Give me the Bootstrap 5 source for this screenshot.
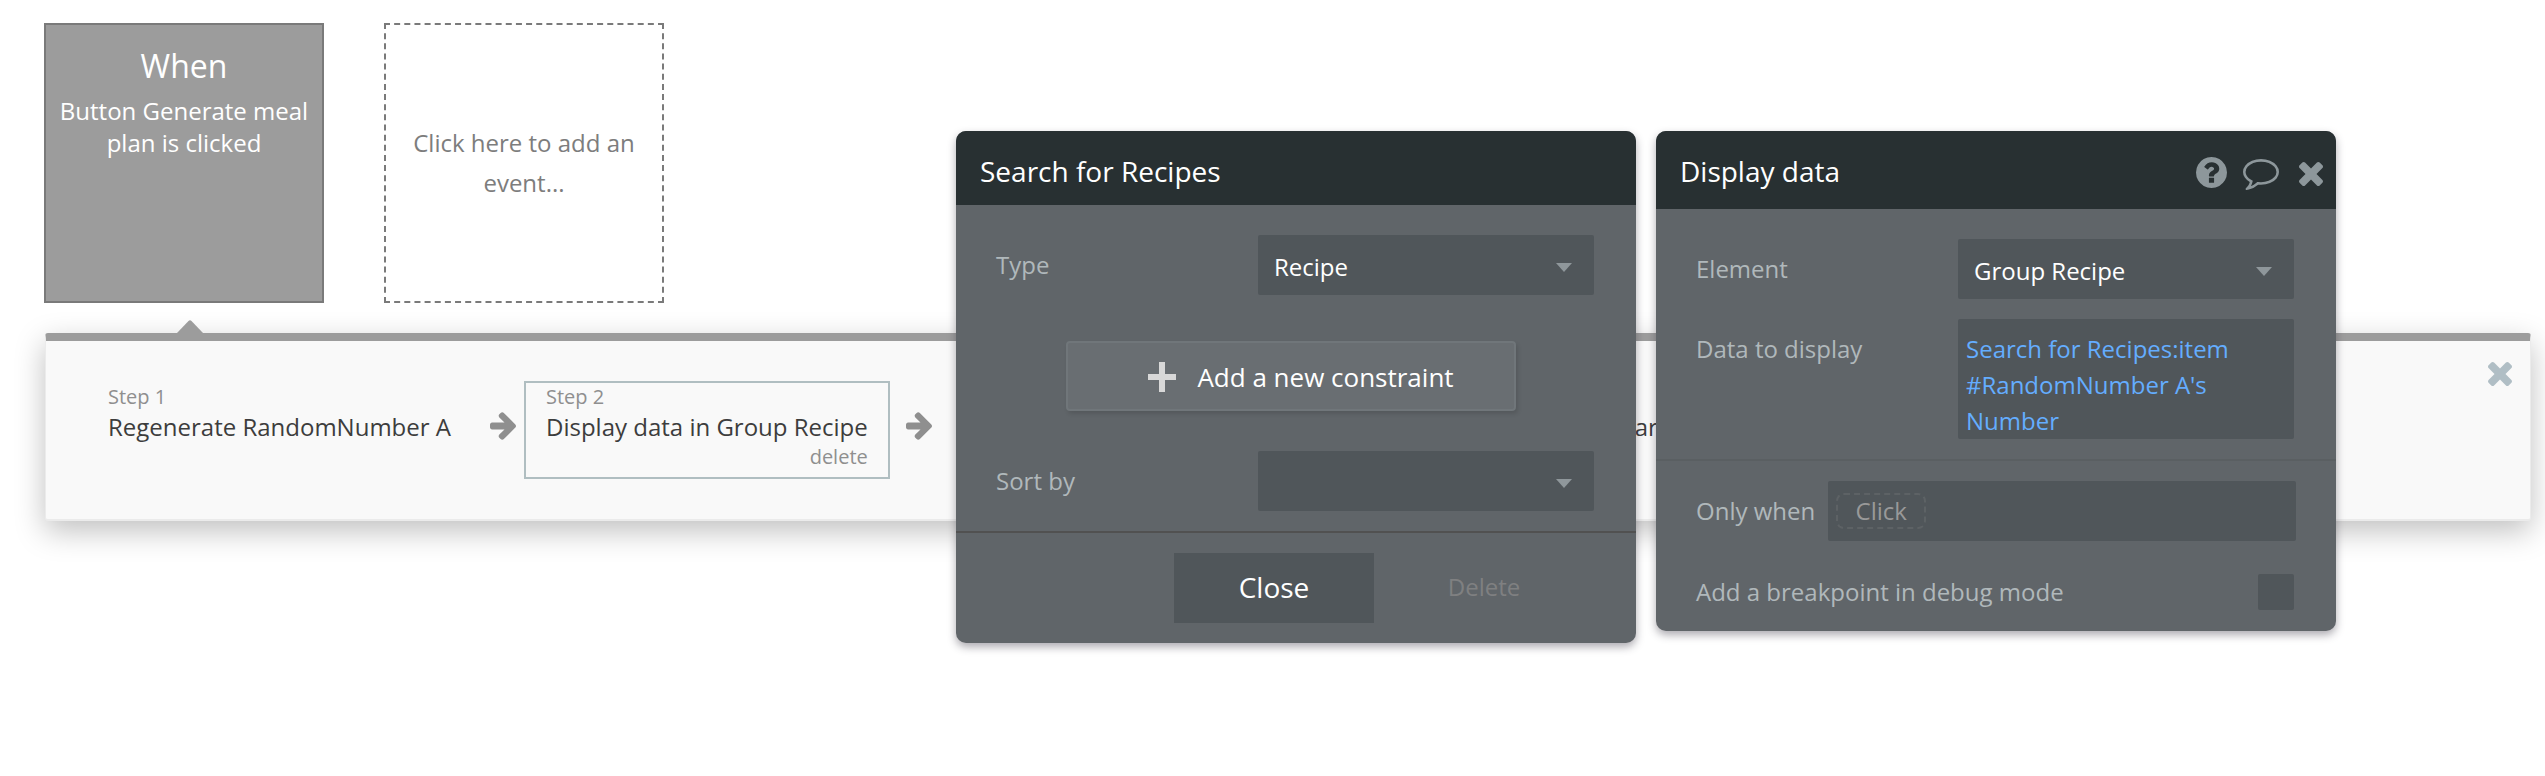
<!DOCTYPE html>
<html lang="en">
<head>
<meta charset="utf-8">
<meta name="viewport" content="width=device-width, initial-scale=1">
<title>Workflow editor</title>
<link href="https://cdn.jsdelivr.net/npm/bootstrap@5.3.0/dist/css/bootstrap.min.css" rel="stylesheet">
<style>
  body { font-family: "Open Sans", "Noto Sans", sans-serif; font-size: 24px; line-height: 36px; color: #3d3d3d; background: #fff; }
  button { font-family: inherit; }
  svg { display: block; fill: currentColor; }

  .events { padding: 23px 44px 0; gap: 60px; }
  .event-tile { width: 280px; height: 280px; border: 2px solid #7a7a7a; background: #9c9c9c; color: #fff; padding: 19px 8px 0; line-height: 32px; text-align: center; }
  .event-tile h2 { font-size: 32px; line-height: 44px; font-weight: 400; margin: 0 0 7px; }
  .event-new { background: #fff; border-style: dashed; color: #7d7d7d; padding: 0 16px; line-height: 40px; }

  .flow { position: relative; margin: 30px 14px 0 45px; border: 1px solid #ebebeb; border-top: 8px solid #9c9c9c; border-bottom-width: 2px; border-radius: 3px; background: #f9f9f9; box-shadow: 0 10px 30px rgba(0,0,0,.25); min-height: 188px; padding: 40px 18px 40px 40px; }
  .flow-pointer { position: absolute; left: 131px; top: -21px; color: #9c9c9c; }
  .step { border: 2px solid transparent; padding: 0 20px; height: 98px; }
  .step.selected { border-color: #b0bec1; margin: 0 16px 0 8px; }
  .step-hidden { margin-left: 681px; }
  .step-no, .step-del { font-size: 20px; line-height: 28px; color: #8f8f8f; }
  .step-title { line-height: 32px; white-space: nowrap; }
  .step-del { align-self: flex-end; border: 0; background: none; padding: 0; }
  .arrow { color: #8f8f8f; margin-top: 31px; }
  .arrow-first { margin-left: 17px; }
  .plain { border: 0; background: none; padding: 0; color: inherit; }
  .flow-close { color: #b0bec5; margin-top: -19px; }

  .popups { position: absolute; left: 956px; top: 131px; gap: 20px; }
  .editor { width: 680px; border-radius: 10px; background: #606569; color: #b0b8bb; box-shadow: 0 4px 8px rgba(50,45,60,.4); overflow: hidden; }
  .editor-head { background: #283032; color: #fff; height: 74px; padding: 6px 13px 0 24px; }
  .editor-head.tall { height: 78px; padding-top: 2px; }
  .editor-head h1 { font-size: 28px; line-height: 40px; font-weight: 400; margin: 0; }
  .tools { color: #8d979b; gap: 16px; padding-top: 6px; }
  .tools .help { padding-bottom: 3px; }
  .tools .dismiss { padding-left: 4px; }
  .editor-body { padding: 30px 42px 20px 40px; }
  .field, .field:focus { background-color: #50565a; color: #fff; border: 0; border-radius: 2px; font-size: 24px; line-height: 36px; box-shadow: none; }
  .pick { width: 336px; height: 60px; padding: 4px 16px 0; background-image: url("data:image/svg+xml,%3Csvg xmlns='http://www.w3.org/2000/svg' viewBox='0 0 16 9'%3E%3Cpath fill='%238f979b' d='M0 0h16L8 9z'/%3E%3C/svg%3E"); background-size: 16px 9px; background-position: right 22px top 28px; }
  .expr, .expr:focus { width: 336px; height: 120px; padding: 12px 8px 0; color: #64adff; resize: none; overflow: hidden; }
  .btn-add { width: 450px; height: 70px; margin: 46px 0 40px 70px; padding: 2px 0 0 20px; border: 2px solid #70767a; border-radius: 4px; background: #696e72; color: #fff; font-size: 26px; box-shadow: 2px 3px 4px rgba(0,0,0,.12); gap: 21px; }
  .btn-add svg { color: #d8d8d8; }
  .editor-foot { border-top: 2px solid #515151; padding: 20px 52px 20px 0; gap: 10px; }
  .editor-foot button { width: 200px; height: 70px; border: 0; padding: 0 0 2px; }
  .btn-shut { background: #50565a; color: #fff; font-size: 28px; }
  .btn-del { background: none; color: #7f8081; }
  .rule { border-top: 2px solid #5a5f62; padding: 20px 42px 20px 40px; }
  .only { margin-right: 5px; }
  .cond { height: 60px; padding: 0 8px; margin-right: -2px; }
  .chip { border: 2px dashed #5d6265; border-radius: 8px; background: none; color: #999; width: 90px; height: 36px; line-height: 30px; padding: 0; }
  .debug { padding: 33px 0 1px; }
  .tick { appearance: none; width: 36px; height: 36px; background: #50565a; border-radius: 2px; margin: 0; }
</style>
</head>
<body class="min-vh-100">
<main class="min-vh-100">
  <section class="events d-flex">
    <div class="event-tile">
      <h2>When</h2>
      Button Generate meal plan is clicked
    </div>
    <button type="button" class="event-tile event-new">Click here to add an event...</button>
  </section>

  <section class="flow d-flex align-items-start">
    <svg class="flow-pointer" width="26" height="13" viewBox="0 0 26 13"><path d="M0 13 11.500 1q1.500-1.500 3 0L26 13z"/></svg>
    <div class="step d-flex flex-column">
      <span class="step-no">Step 1</span>
      <span class="step-title">Regenerate RandomNumber A</span>
    </div>
    <svg class="arrow arrow-first flex-shrink-0" width="26" height="28" viewBox="128 181 1472 1558"><path id="arrow" d="M1600 960q0 54-37 91l-651 651q-39 37-91 37-51 0-90-37l-75-75q-38-38-38-91t38-91l293-293h-704q-52 0-84.500-37.500t-32.500-90.500v-128q0-53 32.500-90.500t84.500-37.500h704l-293-294q-38-36-38-90t38-90l75-75q38-38 90-38 53 0 91 38l651 651q37 35 37 90z"/></svg>
    <div class="step selected d-flex flex-column">
      <span class="step-no">Step 2</span>
      <span class="step-title">Display data in Group Recipe</span>
      <button type="button" class="step-del">delete</button>
    </div>
    <svg class="arrow flex-shrink-0" width="26" height="28" viewBox="128 181 1472 1558"><use href="#arrow"/></svg>
    <div class="step step-hidden d-flex flex-column">
      <span class="step-no">&nbsp;</span>
      <span class="step-title">ar</span>
    </div>
    <button type="button" class="plain flow-close ms-auto" aria-label="Close workflow">
      <svg width="24" height="24" viewBox="302 366 1188 1188"><path id="cross" d="M1490 1322q0 40-28 68l-136 136q-28 28-68 28t-68-28l-294-294-294 294q-28 28-68 28t-68-28l-136-136q-28-28-28-68t28-68l294-294-294-294q-28-28-28-68t28-68l136-136q28-28 68-28t68 28l294 294 294-294q28-28 68-28t68 28l136 136q28 28 28 68t-28 68l-294 294 294 294q28 28 28 68z"/></svg>
    </button>
  </section>
</main>

<div class="popups d-flex align-items-start">
  <section class="editor">
    <header class="editor-head d-flex align-items-center"><h1>Search for Recipes</h1></header>
    <div class="editor-body">
      <div class="d-flex justify-content-between align-items-center">
        <label for="type">Type</label>
        <select id="type" class="form-select field pick"><option>Recipe</option></select>
      </div>
      <button type="button" class="btn-add d-flex align-items-center justify-content-center">
        <svg width="28" height="30" viewBox="0 0 28 30"><path d="M11 0h6v12h11v6H17v12h-6V18H0v-6h11z"/></svg>
        Add a new constraint
      </button>
      <div class="d-flex justify-content-between align-items-center">
        <label for="sort">Sort by</label>
        <select id="sort" class="form-select field pick"><option></option></select>
      </div>
    </div>
    <footer class="editor-foot d-flex justify-content-end">
      <button type="button" class="btn-shut">Close</button>
      <button type="button" class="btn-del">Delete</button>
    </footer>
  </section>

  <section class="editor">
    <header class="editor-head tall d-flex align-items-center justify-content-between">
      <h1>Display data</h1>
      <div class="tools d-flex align-items-center">
        <button type="button" class="plain help" aria-label="Help"><svg width="31" height="31" viewBox="128 128 1536 1536"><path d="M1024 1376v-192q0-14-9-23t-23-9h-192q-14 0-23 9t-9 23v192q0 14 9 23t23 9h192q14 0 23-9t9-23zm256-672q0-88-55.500-163t-138.500-116-170-41q-243 0-371 213-15 24 8 42l132 100q7 6 19 6 16 0 25-12 53-68 86-92 34-24 86-24 48 0 85.500 26t37.500 59q0 38-20 61t-68 45q-63 28-115.500 86.500t-52.500 125.500v36q0 14 9 23t23 9h192q14 0 23-9t9-23q0-19 21.500-49.500t54.500-49.500q32-18 49-28.500t46-35 44.500-48 28-60.500 12.500-81zm384 192q0 209-103 385.500t-279.500 279.500-385.500 103-385.500-103-279.500-279.500-103-385.500 103-385.500 279.500-279.500 385.500-103 385.500 103 279.500 279.500 103 385.500z"/></svg></button>
        <button type="button" class="plain" aria-label="Comment"><svg width="36" height="31" viewBox="0 256 1792 1536"><path d="M896 384q-204 0-381.500 69.500t-282 187.500-104.500 255q0 112 71.500 213.500t201.500 175.500l87 50-27 96q-24 91-70 172 152-63 275-171l43-38 57 6q69 8 130 8 204 0 381.500-69.500t282-187.500 104.500-255-104.500-255-282-187.500-381.500-69.500zm896 512q0 174-120 321.500t-326 233-450 85.500q-70 0-145-8-198 175-460 242-49 14-114 22h-5q-15 0-27-10.500t-16-27.500v-1q-3-4-.5-12t2-10 4.500-9.500l6-9 7-8.500 8-9q7-8 31-34.500t34.500-38 31-39.500 32.500-51 27-59 26-76q-157-89-247.500-220t-90.500-281q0-174 120-321.500t326-233 450-85.500 450 85.500 326 233 120 321.500z"/></svg></button>
        <button type="button" class="plain dismiss" aria-label="Close"><svg width="24" height="24" viewBox="302 366 1188 1188"><use href="#cross"/></svg></button>
      </div>
    </header>
    <div class="editor-body">
      <div class="d-flex justify-content-between align-items-center">
        <label for="element">Element</label>
        <select id="element" class="form-select field pick"><option>Group Recipe</option></select>
      </div>
      <div class="d-flex justify-content-between align-items-start mt-3 pt-1">
        <label for="data" class="pt-2 mt-1">Data to display</label>
        <textarea id="data" class="form-control field expr" spellcheck="false">Search for Recipes:item #RandomNumber A's Number</textarea>
      </div>
    </div>
    <div class="rule">
      <div class="d-flex align-items-center gap-2">
        <span class="only">Only when</span>
        <div class="field cond flex-grow-1 d-flex align-items-center"><button type="button" class="chip">Click</button></div>
      </div>
      <div class="debug d-flex justify-content-between align-items-center">
        <label for="debug">Add a breakpoint in debug mode</label>
        <input id="debug" type="checkbox" class="tick">
      </div>
    </div>
  </section>
</div>
<script src="https://cdn.jsdelivr.net/npm/bootstrap@5.3.0/dist/js/bootstrap.bundle.min.js"></script>
</body>
</html>
